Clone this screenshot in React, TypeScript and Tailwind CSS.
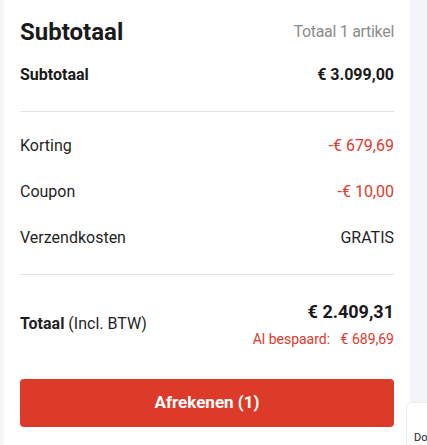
import React from 'react'

const font = { fontFamily: 'Roboto, "Liberation Sans", sans-serif' }

function Row({ label, value, red }: { label: string; value: string; red?: boolean }) {
  return (
    <div className="flex h-[46px] items-center justify-between text-[16px]">
      <span className="text-[#1f1f1f]">{label}</span>
      <span className={red ? 'text-[#e0392b]' : 'text-[#1f1f1f]'}>{value}</span>
    </div>
  )
}

export default function App() {
  return (
    <div className="relative h-[445px] w-[427px] overflow-hidden bg-[#f3f5f9]" style={font}>
      <div className="ml-1 h-full w-[406px] bg-white px-4 pt-4">
        <div className="flex h-8 items-center justify-between">
          <h1 className="text-[24px] font-bold text-[#1a1a1a]">Subtotaal</h1>
          <span className="text-[16px] tracking-[-0.3px] text-[#8c8c8c]">Totaal 1 artikel</span>
        </div>
        <div className="mt-[15px] flex h-6 items-center justify-between text-[16px] font-bold text-[#1a1a1a]">
          <span>Subtotaal</span>
          <span>€ 3.099,00</span>
        </div>
        <div className="mt-6 h-px bg-[#e3e3e3]" />
        <div className="pt-[11px]">
          <Row label="Korting" value="-€ 679,69" red />
          <Row label="Coupon" value="-€ 10,00" red />
          <Row label="Verzendkosten" value="GRATIS" />
        </div>
        <div className="mt-[13px] h-px bg-[#e3e3e3]" />
        <div className="mt-[23px] flex items-center justify-between">
          <div className="text-[16px] text-[#1f1f1f]">
            <span className="font-bold">Totaal</span> (Incl. BTW)
          </div>
          <div className="flex flex-col items-end">
            <span className="text-[18px] font-bold leading-7 text-[#1a1a1a]">€ 2.409,31</span>
            <span className="mt-[3px] text-[14px] leading-5 text-[#e0392b]">
              Al bespaard:&nbsp;&nbsp; € 689,69
            </span>
          </div>
        </div>
        <button className="mt-[30px] flex h-12 w-full items-center justify-center rounded-[4px] bg-[#dc3b2a] text-[17px] font-bold text-white">
          Afrekenen (1)
        </button>
      </div>
      <div className="absolute left-[406px] top-[402px] h-[43px] w-[21px] rounded-tl-[6px] border-l border-t border-[#ececec] bg-white pl-[7px] pt-[29px] text-[11px] leading-[12px] text-[#222]">
        Do
      </div>
    </div>
  )
}
